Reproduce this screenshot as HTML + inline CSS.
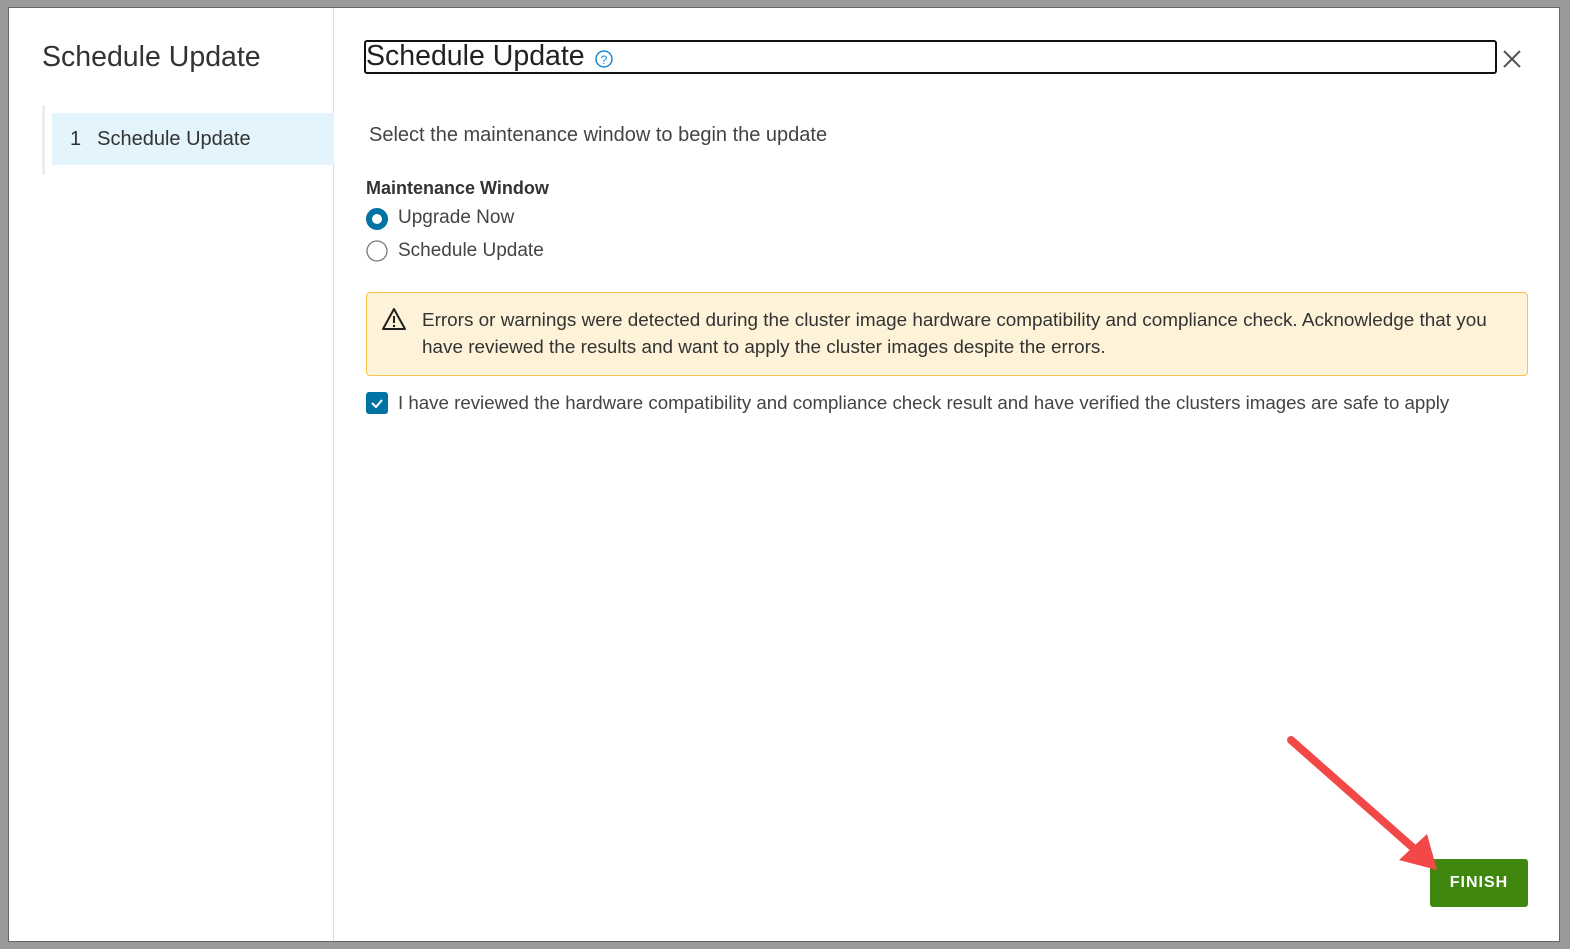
<!DOCTYPE html>
<html><head><style>
*{margin:0;padding:0;box-sizing:border-box}
body{width:1570px;height:949px;background:#9a9a9a;font-family:"Liberation Sans",sans-serif;position:relative;overflow:hidden;color:#333}
.dlg{position:absolute;left:8px;top:7px;width:1552px;height:935px;background:#fff;border:1px solid #666}
.side{position:absolute;left:0;top:0;width:325px;height:100%;border-right:1px solid #d8dde0}
.t{position:absolute;font-size:28.5px;color:#333;white-space:nowrap}
.step{position:absolute;left:43px;top:105px;width:282px;height:52px;background:#e3f4fc;font-size:20px;color:#333;line-height:52px;padding-left:18px}
.bar{position:absolute;left:33px;top:97px;width:3px;height:70px;background:#e8eef1}
.txt{position:absolute;font-size:18px;color:#444;white-space:nowrap}
.warn{position:absolute;left:357px;top:284px;width:1162px;height:84px;background:#fef2d8;border:1.5px solid #f7c14a;border-radius:4px}
.fin{position:absolute;left:1421px;top:851px;width:98px;height:48px;background:#3f870f;border-radius:3px;color:#fff;font-weight:bold;font-size:16px;letter-spacing:1px;text-align:center;line-height:48px}
</style></head><body>
<div class="dlg">
 <div class="side">
  <div class="t" style="left:33px;top:33px">Schedule Update</div>
  <div class="bar"></div>
  <div class="step"><span style="margin-right:16px">1</span>Schedule Update</div>
 </div>
 <div style="position:absolute;left:355px;top:32px;width:1133px;height:34px;border:2px solid #111;border-radius:3px"></div>
 <div class="t" style="left:357px;top:32px;color:#222">Schedule Update</div>
 <svg style="position:absolute;left:585px;top:41px" width="20" height="20" viewBox="0 0 20 20"><circle cx="10" cy="10" r="8" fill="none" stroke="#1a8bd1" stroke-width="1.5"/><text x="10" y="15" font-size="12" text-anchor="middle" fill="#1a8bd1" font-family="Liberation Sans">?</text></svg>
 <svg style="position:absolute;left:1493px;top:41px" width="20" height="20" viewBox="0 0 20 20"><path d="M2 2L18 18M18 2L2 18" stroke="#555" stroke-width="2"/></svg>
 <div class="txt" style="left:360px;top:116px;font-size:20px">Select the maintenance window to begin the update</div>
 <div class="txt" style="left:357px;top:170px;font-weight:bold;font-size:18px;color:#333">Maintenance Window</div>
 <svg style="position:absolute;left:357px;top:200px" width="22" height="22"><circle cx="11" cy="11" r="8" fill="#fff" stroke="#0072a3" stroke-width="6"/><circle cx="11" cy="11" r="2.5" fill="#fff"/></svg>
 <div class="txt" style="left:389px;top:199px;font-size:19px">Upgrade Now</div>
 <svg style="position:absolute;left:357px;top:232px" width="22" height="22"><circle cx="11" cy="11" r="10" fill="#fff" stroke="#777" stroke-width="1.3"/></svg>
 <div class="txt" style="left:389px;top:232px;font-size:19px">Schedule Update</div>
 <div class="warn"></div>
 <svg style="position:absolute;left:372px;top:299px" width="26" height="24" viewBox="0 0 26 24"><path d="M13 2L24 22H2Z" fill="none" stroke="#222" stroke-width="2" stroke-linejoin="round"/><path d="M13 9v7" stroke="#222" stroke-width="2"/><circle cx="13" cy="19" r="1.2" fill="#222"/></svg>
 <div class="txt" style="left:413px;top:302px;color:#333;font-size:18.9px">Errors or warnings were detected during the cluster image hardware compatibility and compliance check. Acknowledge that you</div>
 <div class="txt" style="left:413px;top:329px;color:#333;font-size:18.9px">have reviewed the results and want to apply the cluster images despite the errors.</div>
 <svg style="position:absolute;left:357px;top:384px" width="22" height="22"><rect x="0" y="0" width="22" height="22" rx="3" fill="#0072a3"/><path d="M6 11l4 4 6-7" fill="none" stroke="#fff" stroke-width="2"/></svg>
 <div class="txt" style="left:389px;top:384px;font-size:18.7px">I have reviewed the hardware compatibility and compliance check result and have verified the clusters images are safe to apply</div>
 <div class="fin">FINISH</div>
 <svg style="position:absolute;left:1270px;top:720px" width="170" height="150"><path d="M12 12L140 125" stroke="#f24848" stroke-width="8" stroke-linecap="round"/><path d="M158 142L120 132 148 106Z" fill="#f24848"/></svg>
</div>
</body></html>
